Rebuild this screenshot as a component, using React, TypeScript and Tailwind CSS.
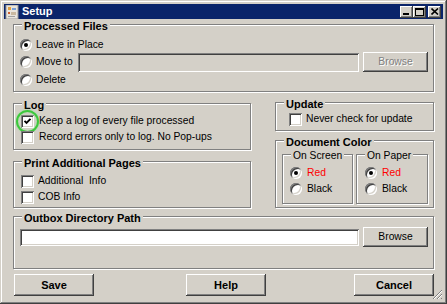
import type { ReactNode } from "react"

const sunken =
  "shadow-[inset_1px_1px_0_#808080,inset_-1px_-1px_0_#fff,inset_2px_2px_0_#404040,inset_-2px_-2px_0_#d4d0c8]"
const raised =
  "shadow-[inset_-1px_-1px_0_#404040,inset_1px_1px_0_#fff,inset_-2px_-2px_0_#808080,inset_2px_2px_0_#d4d0c8]"

function GroupBox({
  title,
  bold = true,
  className = "",
  children,
}: {
  title: string
  bold?: boolean
  className?: string
  children?: ReactNode
}) {
  return (
    <div
      className={`flex flex-col border border-[#808080] shadow-[inset_1px_1px_0_#fff,1px_1px_0_#fff] ${className}`}
    >
      <div
        className={`-mt-[6px] ml-[8px] w-fit bg-[#d4d0c8] px-[2px] leading-[14px] ${
          bold ? "text-[11px] font-bold" : "text-[10.3px]"
        }`}
      >
        {title}
      </div>
      {children}
    </div>
  )
}

function Radio({ checked = false }: { checked?: boolean }) {
  return (
    <span
      className={`flex h-[12px] w-[12px] shrink-0 items-center justify-center rounded-full bg-white ${sunken}`}
    >
      {checked && <span className="h-[4px] w-[4px] rounded-full bg-black" />}
    </span>
  )
}

function Checkbox({ checked = false, highlight = false }: { checked?: boolean; highlight?: boolean }) {
  return (
    <span className={`relative flex h-[13px] w-[13px] shrink-0 items-center justify-center bg-white ${sunken}`}>
      {checked && (
        <svg width="9" height="9" viewBox="0 0 9 9">
          <polyline points="1.5,3.8 3.5,5.8 7.5,1.8" fill="none" stroke="#000" strokeWidth="1.9" />
        </svg>
      )}
      {highlight && (
        <span className="absolute -inset-[5px] rounded-full border-2 border-[#3cc83c] shadow-[0_0_2px_#8fe88f,inset_0_0_2px_#8fe88f]" />
      )}
    </span>
  )
}

function Button({ label, bold = false, disabled = false, className = "" }: { label: string; bold?: boolean; disabled?: boolean; className?: string }) {
  return (
    <div
      className={`flex shrink-0 items-center justify-center bg-[#d4d0c8] ${raised} ${
        bold ? "text-[11px] font-bold" : "text-[10.3px]"
      } ${disabled ? "text-[#808080] [text-shadow:1px_1px_0_#fff]" : "text-black"} ${className}`}
    >
      {label}
    </div>
  )
}

function CaptionButton({ children, className = "" }: { children: ReactNode; className?: string }) {
  return (
    <div className={`relative flex h-[12px] w-[13px] items-center justify-center bg-[#d4d0c8] ${raised} ${className}`}>
      {children}
    </div>
  )
}

export default function App() {
  return (
    <div className="relative flex h-[304px] w-[447px] flex-col bg-[#d4d0c8] p-[4px] font-['Liberation_Sans',Arial,sans-serif] text-black shadow-[inset_-1px_-1px_0_#404040,inset_1px_1px_0_#d4d0c8,inset_-2px_-2px_0_#808080,inset_2px_2px_0_#fff]">
      {/* Title bar */}
      <div className="flex h-[15px] shrink-0 items-center bg-[#0a246a] pr-[2px]">
        <svg width="14" height="14" viewBox="0 0 14 14" className="ml-[1px]">
          <rect x="1" y="0" width="12" height="14" fill="#e8e4dc" />
          <rect x="1" y="0" width="12" height="14" fill="none" stroke="#9a9a9a" strokeWidth="1" />
          <rect x="3" y="2" width="3" height="3" fill="#e0a040" />
          <rect x="7" y="3" width="4" height="2" fill="#7aa0d8" />
          <rect x="3" y="7" width="2" height="2" fill="#d06030" />
          <rect x="6" y="7" width="5" height="3" fill="#c8b8a0" />
          <rect x="3" y="11" width="7" height="1" fill="#a0a0a0" />
        </svg>
        <span className="ml-[3px] text-[11px] font-bold leading-[15px] text-white">Setup</span>
        <div className="ml-auto flex items-center">
          <CaptionButton>
            <span className="absolute bottom-[3px] left-[3px] h-[2px] w-[6px] bg-black" />
          </CaptionButton>
          <CaptionButton>
            <span className="h-[8px] w-[9px] border border-t-2 border-black" />
          </CaptionButton>
          <CaptionButton className="ml-[2px]">
            <svg width="8" height="7" viewBox="0 0 8 7">
              <path d="M0.5 0.5 L7 6.5 M7 0.5 L0.5 6.5" stroke="#000" strokeWidth="1.6" />
            </svg>
          </CaptionButton>
        </div>
      </div>

      {/* Body */}
      <div className="flex flex-col px-[9px] text-[10.3px]">
        <GroupBox title="Processed Files" className="mt-[5px] h-[68px]">
          <div className="mt-[4px] flex h-[15px] items-center gap-[4px] pl-[6px]">
            <Radio checked />
            <span>Leave in Place</span>
          </div>
          <div className="flex h-[20px] items-center pl-[6px] pr-[5px]">
            <Radio />
            <span className="ml-[4px]">Move to</span>
            <div className={`ml-auto h-[19px] w-[281px] bg-[#d4d0c8] ${sunken}`} />
            <Button label="Browse" disabled className="ml-[4px] h-[20px] w-[65px]" />
          </div>
          <div className="flex h-[15px] items-center gap-[4px] pl-[6px]">
            <Radio />
            <span>Delete</span>
          </div>
        </GroupBox>

        <div className="mt-[10px] flex justify-between">
          <div className="flex w-[238px] flex-col">
            <GroupBox title="Log" className="mt-[1px] h-[47px]">
              <div className="mt-[1px] flex h-[16px] items-center gap-[5px] pl-[7px]">
                <Checkbox checked highlight />
                <span>Keep a log of every file processed</span>
              </div>
              <div className="flex h-[16px] items-center gap-[5px] pl-[7px]">
                <Checkbox />
                <span>Record errors only to log. No Pop-ups</span>
              </div>
            </GroupBox>
            <GroupBox title="Print Additional Pages" className="mt-[11px] h-[47px]">
              <div className="mt-[3px] flex h-[16px] items-center gap-[4px] pl-[7px]">
                <Checkbox />
                <span className="whitespace-pre">Additional  Info</span>
              </div>
              <div className="flex h-[16px] items-center gap-[4px] pl-[7px]">
                <Checkbox />
                <span>COB Info</span>
              </div>
            </GroupBox>
          </div>

          <div className="flex w-[159px] flex-col">
            <GroupBox title="Update" className="h-[29px]">
              <div className="flex h-[16px] items-center gap-[4px] pl-[13px]">
                <Checkbox />
                <span>Never check for update</span>
              </div>
            </GroupBox>
            <GroupBox title="Document Color" className="mt-[9px] h-[68px]">
              <div className="mt-[5px] flex gap-[3px] pl-[6px]">
                <GroupBox title="On Screen" bold={false} className="h-[50px] w-[71px]">
                  <div className="mt-[2px] flex h-[16px] items-center gap-[5px] pl-[7px]">
                    <Radio checked />
                    <span className="text-[#ff0000]">Red</span>
                  </div>
                  <div className="flex h-[16px] items-center gap-[5px] pl-[7px]">
                    <Radio />
                    <span>Black</span>
                  </div>
                </GroupBox>
                <GroupBox title="On Paper" bold={false} className="h-[50px] w-[72px]">
                  <div className="mt-[2px] flex h-[16px] items-center gap-[5px] pl-[8px]">
                    <Radio checked />
                    <span className="text-[#ff0000]">Red</span>
                  </div>
                  <div className="flex h-[16px] items-center gap-[5px] pl-[8px]">
                    <Radio />
                    <span>Black</span>
                  </div>
                </GroupBox>
              </div>
            </GroupBox>
          </div>
        </div>

        <GroupBox title="Outbox Directory Path" className="mt-[8px] h-[53px]">
          <div className="mt-[2px] flex h-[20px] items-center gap-[4px] pl-[6px]">
            <div className={`h-[17px] w-[339px] bg-white ${sunken}`} />
            <Button label="Browse" className="h-[20px] w-[65px]" />
          </div>
        </GroupBox>

        <div className="mt-[5px] flex h-[22px] pl-[1px]">
          <Button label="Save" bold className="h-[22px] w-[80px]" />
          <Button label="Help" bold className="ml-[92px] h-[22px] w-[80px]" />
          <Button label="Cancel" bold className="ml-auto h-[22px] w-[80px]" />
        </div>
      </div>

      {/* Resize grip */}
      <svg width="11" height="11" viewBox="0 0 11 11" className="absolute bottom-[4px] right-[4px]">
        <path d="M10 1 L1 10 M10 5 L5 10 M10 9 L9 10" stroke="#808080" strokeWidth="1" />
        <path d="M10 2 L2 10 M10 6 L6 10" stroke="#fff" strokeWidth="1" />
      </svg>
    </div>
  )
}
